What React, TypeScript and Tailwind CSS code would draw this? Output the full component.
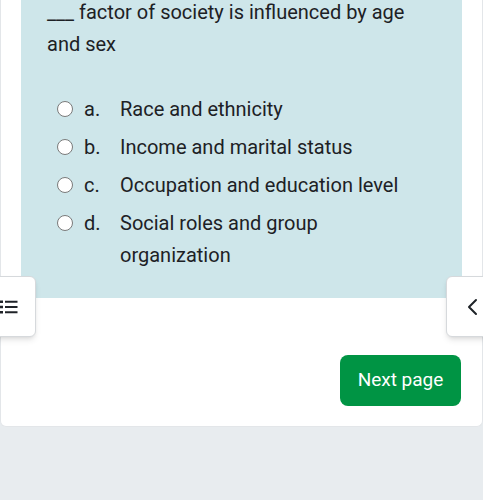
import React from 'react';

const options = [
  { key: 'a.', text: 'Race and ethnicity' },
  { key: 'b.', text: 'Income and marital status' },
  { key: 'c.', text: 'Occupation and education level' },
  { key: 'd.', text: 'Social roles and group organization' },
];

const ListIcon = () => (
  <svg width="18" height="16" viewBox="0 0 18 16" fill="none">
    <rect x="0" y="1.5" width="3" height="2.5" fill="#1f2328" />
    <rect x="0" y="6.75" width="3" height="2.5" fill="#1f2328" />
    <rect x="0" y="12" width="3" height="2.5" fill="#1f2328" />
    <rect x="5" y="1.75" width="12.5" height="2" fill="#1f2328" />
    <rect x="5" y="7" width="12.5" height="2" fill="#1f2328" />
    <rect x="5" y="12.25" width="12.5" height="2" fill="#1f2328" />
  </svg>
);

const ChevronLeft = () => (
  <svg width="14" height="20" viewBox="0 0 14 20" fill="none">
    <path d="M10 3 L3 10 L10 17" stroke="#1f2328" strokeWidth="2" strokeLinecap="round" strokeLinejoin="round" />
  </svg>
);

export default function App() {
  return (
    <div className="relative h-[500px] w-[483px] overflow-hidden bg-[#e8ecef] text-[#1d2125] font-['Roboto',sans-serif]">
      {/* Question card */}
      <div className="mt-[-4px] rounded-b-md border border-t-0 border-[#e3e6e9] bg-white pb-5">
        <div className="mx-5 bg-[#cee6ea] px-[26px] pb-[27px]">
          <div className="text-[20px] leading-[32px]">___ factor of society is influenced by age and sex</div>
          <div className="mt-[33px] flex flex-col gap-[6px]">
            {options.map((o) => (
              <label key={o.key} className="flex items-start text-[20px] leading-[32px]">
                <span className="ml-[10px] mt-[8px] h-4 w-4 shrink-0 rounded-full border-[1.5px] border-[#7a7a7a] bg-white" />
                <span className="ml-[11px] w-[36px] shrink-0">{o.key}</span>
                <span className="max-w-[300px]">{o.text}</span>
              </label>
            ))}
          </div>
        </div>
        <div className="mt-[57px] flex justify-end pr-[21px]">
          <button
            type="button"
            className="h-[51px] w-[121px] rounded-lg bg-[#009444] text-[19px] text-white"
          >
            Next page
          </button>
        </div>
      </div>

      {/* Side drawer toggles */}
      <button
        type="button"
        className="absolute left-[-8px] top-[276px] flex h-[61px] w-[44px] items-center justify-start rounded-md border border-[#d6d9dc] bg-white pl-[7px] shadow-md"
      >
        <ListIcon />
      </button>
      <button
        type="button"
        className="absolute right-[-8px] top-[276px] flex h-[61px] w-[45px] items-center justify-start rounded-md border border-[#d6d9dc] bg-white pl-[19px] shadow-md"
      >
        <ChevronLeft />
      </button>
    </div>
  );
}
